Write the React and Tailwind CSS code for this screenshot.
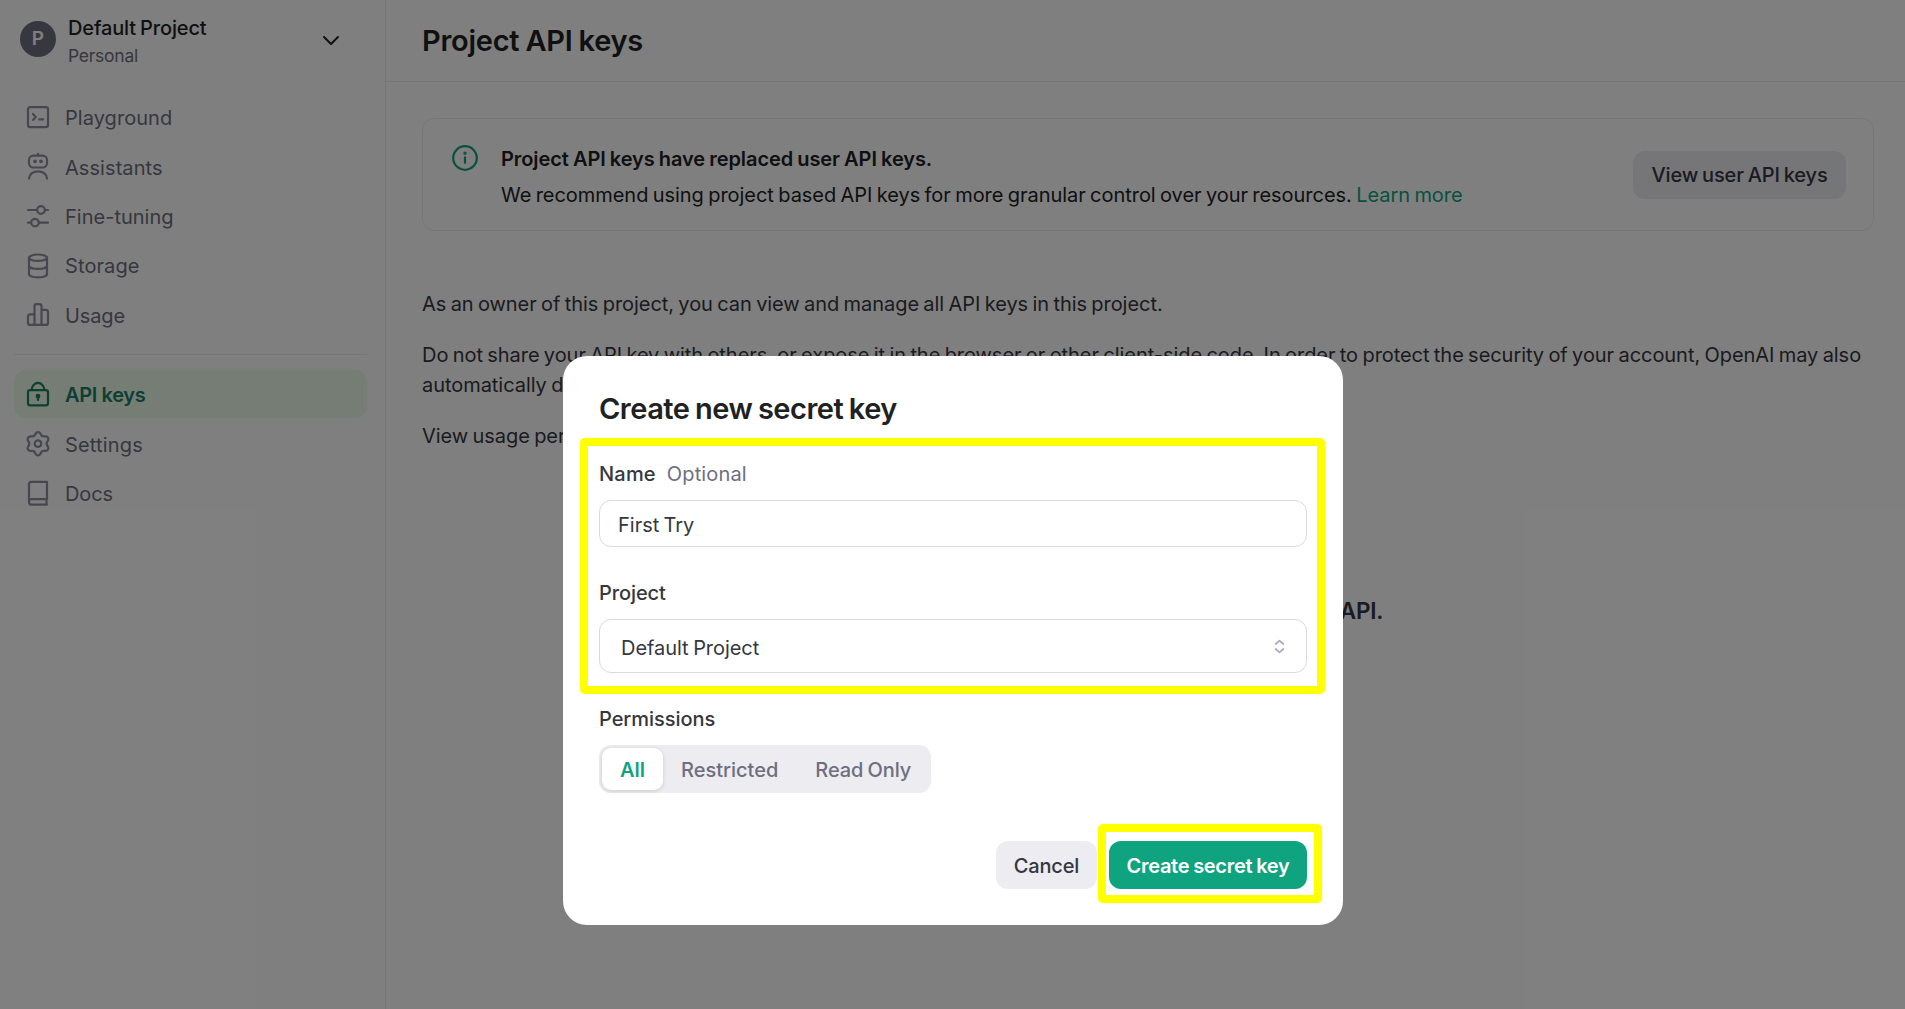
import React from "react";

function Icon({ children, size = 26, className = "" }) {
  return (
    <svg
      width={size}
      height={size}
      viewBox="0 0 26 26"
      fill="none"
      stroke="currentColor"
      strokeWidth="2.2"
      strokeLinecap="round"
      strokeLinejoin="round"
      className={"overflow-visible " + className}
    >
      {children}
    </svg>
  );
}

const PlaygroundIcon = () => (
  <Icon>
    <rect x="3" y="3.1" width="20" height="20" rx="2.2" />
    <path d="M8 9.9l2.8 3L8 15.9M14.2 15.4h4" />
  </Icon>
);
const AssistantsIcon = () => (
  <Icon>
    <path d="M13 .8v1.500" />
    <rect x="4" y="2.700" width="18" height="11.800" rx="4.200" />
    <path d="M4 25.600c0-4.400 4-7.300 9-7.300s9 2.900 9 7.300" />
    <circle cx="10" cy="8.300" r=".8" fill="currentColor" />
    <circle cx="16" cy="8.300" r=".8" fill="currentColor" />
  </Icon>
);
const TuningIcon = () => (
  <Icon>
    <path d="M3 7h8.700M20 7h3M3 19.600h2.200M13.700 19.600H23" />
    <circle cx="16" cy="7" r="3.800" />
    <circle cx="10" cy="19.600" r="3.800" />
  </Icon>
);
const StorageIcon = () => (
  <Icon>
    <ellipse cx="13" cy="5.700" rx="9" ry="3.200" />
    <path d="M4 5.700v16.400c0 1.900 4 3.300 9 3.300s9-1.400 9-3.300V5.700M4 13.700c0 1.800 4 3.200 9 3.200s9-1.400 9-3.200" />
  </Icon>
);
const UsageIcon = () => (
  <Icon>
    <path d="M9.500 23.900H5a2 2 0 0 1-2-2v-6.500a2 2 0 0 1 2-2h4.500M9.500 23.900V5.200a2 2 0 0 1 2-2h3a2 2 0 0 1 2 2v18.700zM16.500 8.900H21a2 2 0 0 1 2 2v11a2 2 0 0 1-2 2h-4.500" />
  </Icon>
);
const LockIcon = () => (
  <Icon>
    <rect x="3" y="9.100" width="20" height="15.300" rx="2.200" />
    <path d="M6.700 9C7 5 9.600 1.800 13 1.800S19 5 19.300 9" />
    <circle cx="13" cy="15.200" r="1.300" fill="currentColor" />
    <path d="M13 16v3" />
  </Icon>
);
const SettingsIcon = () => (
  <Icon>
    <g transform="translate(-.4 1.100) scale(1.030)">
      <path d="M10.700 2.300c1-1.800 3.600-1.800 4.600 0l.9 1.700c.5.800 1.300 1.200 2.200 1.200l2 0c2 0 3.400 2.200 2.300 4l-1 1.700c-.5.900-.5 1.700 0 2.500l1 1.800c1.100 1.800-.3 4-2.300 4h-2c-.9 0-1.700.5-2.200 1.300l-.9 1.700c-1 1.800-3.600 1.800-4.600 0l-.9-1.700c-.5-.8-1.300-1.300-2.200-1.300h-2c-2 0-3.400-2.200-2.300-4l1-1.800c.5-.8.5-1.600 0-2.500l-1-1.700c-1.100-1.800.3-4 2.300-4h2c.9 0 1.700-.4 2.200-1.200z" />
      <circle cx="13" cy="12.200" r="3.200" />
    </g>
  </Icon>
);
const DocsIcon = () => (
  <Icon>
    <path d="M22 1.900H6a2 2 0 0 0-2 2v18.200a2.500 2.500 0 0 0 2.500 2.500H22M22 1.900v17.300H6.500A2.500 2.500 0 0 0 4 21.700M21.500 19.200v5.400" />
  </Icon>
);

const mainNav = [
  { label: "Playground", icon: PlaygroundIcon, track: "tracking-[0.05px]" },
  { label: "Assistants", icon: AssistantsIcon, track: "tracking-[0.07px]" },
  { label: "Fine-tuning", icon: TuningIcon, track: "tracking-[0.01px]" },
  { label: "Storage", icon: StorageIcon, track: "tracking-[0.1px]" },
  { label: "Usage", icon: UsageIcon, track: "tracking-[-0.11px]" },
];
const projectNav = [
  { label: "API keys", icon: LockIcon, track: "tracking-[-0.36px]", active: true },
  { label: "Settings", icon: SettingsIcon, track: "tracking-[0.18px]" },
  { label: "Docs", icon: DocsIcon, track: "tracking-[-0.12px]" },
];

function NavItem({ label, icon: IconComponent, track, active }) {
  return (
    <a
      className={
        "flex h-[47.5px] items-center gap-[14px] rounded-xl pl-[11px] " +
        (active ? "bg-[#ebfaeb] font-semibold text-[#1a7f64]" : "text-[#6e6e80]")
      }
    >
      <span className={active ? "text-[#1a7f64]" : "text-[#8e8ea0]"}>
        <IconComponent />
      </span>
      <span className={"pt-[3px] " + track}>{label}</span>
    </a>
  );
}

function Sidebar() {
  return (
    <aside className="flex w-[386px] shrink-0 flex-col border-r border-[#ececf1] pl-[14px] pr-[18px]">
      <div className="flex h-[93px] items-start pl-[6px]">
        <span className="mt-[21px] flex size-9 items-center justify-center rounded-full bg-[#6e6e80] text-[19px] font-semibold text-white">
          P
        </span>
        <div className="ml-3 mt-[13px] flex flex-1 flex-col">
          <span className="leading-[30px] font-medium tracking-[-0.15px] [word-spacing:-1px] text-[#202123]">
            Default Project
          </span>
          <span className="text-[17.5px] leading-[26px] tracking-[-0.25px] text-[#6e6e80]">Personal</span>
        </div>
        <svg width="18" height="12" viewBox="0 0 18 12" fill="none" stroke="#202123" strokeWidth="2" strokeLinecap="round" strokeLinejoin="round" className="mr-[27px] mt-[34px]">
          <path d="M2 3l7 7 7-7" />
        </svg>
      </div>
      <nav className="flex flex-col gap-[1.875px]">
        {mainNav.map((item) => (
          <NavItem key={item.label} {...item} />
        ))}
      </nav>
      <div className="mt-4 mb-[15px] h-px bg-[#ececf1]" />
      <nav className="flex flex-col gap-[1.875px]">
        {projectNav.map((item) => (
          <NavItem key={item.label} {...item} />
        ))}
      </nav>
    </aside>
  );
}

function Banner() {
  return (
    <section className="flex h-[113px] items-center rounded-xl border border-[#ececf1] pl-[29px] pr-[27px]">
      <Icon className="mb-[33px] shrink-0 text-[#10a37f]">
        <circle cx="13" cy="13" r="11.800" />
        <path d="M13 12.300v5.500" />
        <circle cx="13" cy="8.300" r=".6" fill="currentColor" />
      </Icon>
      <div className="ml-[23px] flex-1 pt-[4px] text-[#202123]">
        <p className="leading-[36px] font-semibold tracking-[-0.08px] [word-spacing:-0.8px]">
          Project API keys have replaced user API keys.
        </p>
        <p className="leading-[36px] tracking-[-0.04px] [word-spacing:-1.2px]">
          We recommend using project based API keys for more granular control over your resources.{" "}
          <a className="text-[#10a37f]">Learn more</a>
        </p>
      </div>
      <button className="h-12 w-[213px] rounded-xl bg-[#ececf1] pt-px font-medium tracking-[-0.15px] [word-spacing:-1.200px] text-[#353740]">
        View user API keys
      </button>
    </section>
  );
}

function Main() {
  return (
    <main className="flex min-w-0 flex-1 flex-col">
      <header className="flex h-[82px] items-center border-b border-[#ececf1] pl-[36px]">
        <h1 className="text-[29px] font-semibold tracking-[-0.25px] [word-spacing:-1px] text-[#202123]">
          Project API keys
        </h1>
      </header>
      <div className="flex flex-col pl-9 pr-[31px] pt-9">
        <Banner />
        <div className="mt-[58px] flex flex-col gap-[21px] leading-[30px] tracking-[-0.05px] [word-spacing:-1.200px] text-[#353740]">
          <p>As an owner of this project, you can view and manage all API keys in this project.</p>
          <p>
            Do not share your API key with others, or expose it in the browser or other client-side code. In order to
            protect the security of your account, OpenAI may also automatically disable any API key that has leaked
            publicly.
          </p>
          <p>View usage per API key on the Usage page.</p>
        </div>
        <p className="mt-[143px] text-center text-[22.5px] leading-[34px] font-semibold tracking-[-0.2px] text-[#353740]">
          Create an API key to access the OpenAI API.
        </p>
      </div>
    </main>
  );
}

function CreateKeyDialog() {
  return (
    <div role="dialog" className="relative mt-[356px] flex h-[569px] w-[780px] flex-col rounded-[24px] bg-white px-9 text-[#353740]">
      <h2 className="mt-[33px] text-[29px] leading-10 font-semibold tracking-[-0.5px] [word-spacing:-1.200px] text-[#202123]">
        Create new secret key
      </h2>
      <div className="mt-[30px] flex gap-[11px] leading-[30px]">
        <span className="font-medium tracking-[0.2px]">Name</span>
        <span className="tracking-[0.15px] text-[#6e6e80]">Optional</span>
      </div>
      <div className="mt-[11px] flex h-[47px] items-center rounded-xl border border-[#d9d9e3] pt-[3px] pl-[18px] [word-spacing:-1.400px]">
        First Try
      </div>
      <div className="mt-[31px] leading-[30px] font-medium tracking-[-0.1px]">Project</div>
      <div className="mt-[11px] flex h-[54px] items-center justify-between rounded-xl border border-[#d9d9e3] pl-[21px] pr-[21px]">
        <span className="pt-[3px] tracking-[-0.05px] [word-spacing:-1px]">Default Project</span>
        <svg width="11" height="15" viewBox="0 0 11 15" fill="none" stroke="#acacbe" strokeWidth="1.800" strokeLinecap="round" strokeLinejoin="round">
          <path d="M1.700 5l3.800-3.400L9.300 5M1.700 10l3.800 3.400L9.300 10" />
        </svg>
      </div>
      <div className="mt-[31px] leading-[30px] font-medium tracking-[-0.04px]">Permissions</div>
      <div className="mt-[11px] flex h-12 w-[332px] rounded-xl bg-[#ececf1] p-[3px] leading-[44px] font-medium text-[#6e6e80]">
        <span className="h-[42px] w-[61px] rounded-[9px] bg-white text-center font-semibold text-[#10a37f] shadow-[0_1px_4px_rgba(0,0,0,0.15)]">
          All
        </span>
        <span className="ml-[18px]">Restricted</span>
        <span className="ml-[37px] tracking-[-0.1px] [word-spacing:-1px]">Read Only</span>
      </div>
      <div className="mt-12 flex justify-end gap-3">
        <button className="h-12 w-[101px] rounded-xl bg-[#ececf1] pt-0.5 font-medium tracking-[-0.17px]">Cancel</button>
        <button className="h-12 w-[198px] rounded-xl bg-[#10a37f] pt-0.5 font-semibold tracking-[-0.3px] [word-spacing:-0.8px] text-white">
          Create secret key
        </button>
      </div>
      <div className="absolute top-[82px] left-[17px] h-[256px] w-[745px] rounded-[5px] border-[8px] border-[#ffff00] shadow-[0_0_1px_#ffff00]" />
      <div className="absolute top-[468px] left-[535px] h-[79px] w-[224px] rounded-[5px] border-[8px] border-[#ffff00] shadow-[0_0_1px_#ffff00]" />
    </div>
  );
}

export default function App() {
  return (
    <div className="relative h-[1009px] w-[1905px] overflow-hidden bg-white font-['Inter','Liberation_Sans',sans-serif] text-[20px]">
      <div className="flex h-full">
        <Sidebar />
        <Main />
      </div>
      <div className="absolute inset-0 flex items-start bg-black/50 pl-[563px]">
        <CreateKeyDialog />
      </div>
    </div>
  );
}
